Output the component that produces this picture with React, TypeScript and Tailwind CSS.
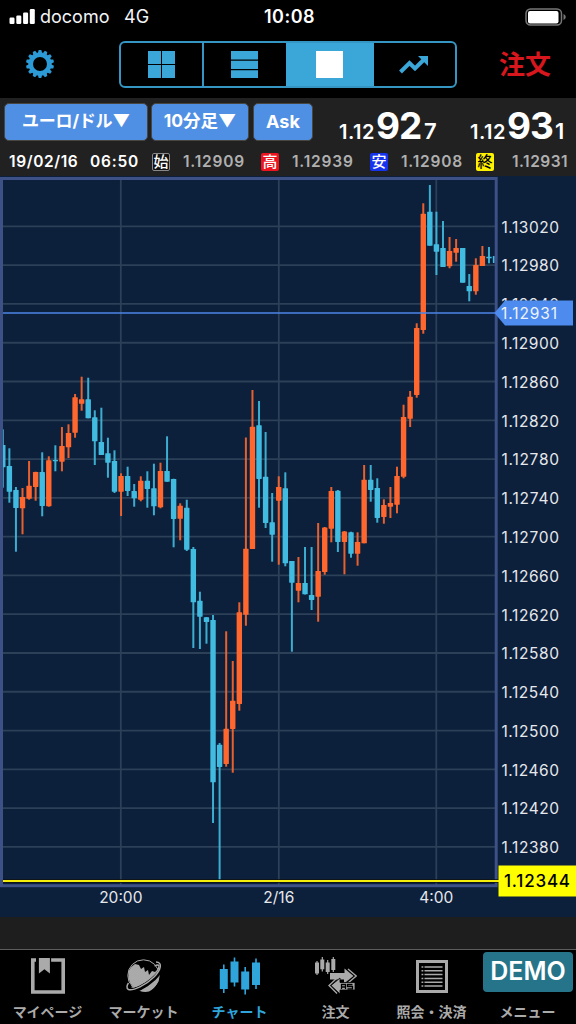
import type { ReactNode } from "react"
import clsx from "clsx"

type Direction = "up" | "down"
// high, body top, body bottom, low (chart y) and direction
type Candle = [number, number, number, number, Direction]

const candles: Candle[] = [
  [429.3, 445, 467.3, 487.7, "down"],
  [448.3, 466, 491.7, 502.7, "down"],
  [487, 490, 508, 551.7, "down"],
  [488, 497, 508.3, 534.3, "up"],
  [461, 485.7, 498.7, 499.7, "up"],
  [471.7, 472, 487, 500.7, "up"],
  [452.3, 472, 506, 516.3, "down"],
  [456.3, 460.3, 506.3, 506.7, "up"],
  [445.3, 460, 461.3, 471.3, "down"],
  [427, 446, 461.7, 471.3, "up"],
  [424.3, 433, 447.3, 458, "up"],
  [394, 397.3, 432.7, 437.7, "up"],
  [376.7, 399.3, 403.7, 410.7, "up"],
  [377.7, 399.3, 418.3, 418.3, "down"],
  [410.3, 417.3, 441.3, 465, "down"],
  [407.7, 442, 455, 455, "down"],
  [437.7, 453.3, 462.7, 477.7, "down"],
  [450.3, 461, 491.7, 493, "down"],
  [473.3, 476, 491.7, 516, "up"],
  [466.7, 476, 491, 496, "down"],
  [484, 491, 498.3, 506.7, "down"],
  [476.3, 480.7, 499.7, 501.3, "up"],
  [471.3, 480.7, 489, 507.7, "down"],
  [463.7, 488.3, 506.3, 515.3, "down"],
  [462.7, 471, 507.3, 508.3, "up"],
  [436.3, 471, 481.7, 481.7, "down"],
  [478.7, 479, 519, 547.3, "down"],
  [503.3, 505.7, 518.7, 540.3, "up"],
  [499.7, 507.7, 549.7, 551, "down"],
  [547, 549, 602.3, 648, "down"],
  [591.7, 600.7, 616.7, 649, "down"],
  [617, 617.3, 622, 643.7, "down"],
  [615, 620, 782.3, 823, "down"],
  [743, 744.7, 767, 880.3, "down"],
  [631.3, 728.7, 764, 766.7, "up"],
  [661, 700.7, 729, 772.7, "up"],
  [602.3, 612.3, 704, 710.7, "up"],
  [437.5, 548.7, 614.8, 625.7, "up"],
  [390, 426.7, 549, 549, "up"],
  [401, 425.3, 479, 507.7, "down"],
  [432, 476.7, 523, 528, "down"],
  [493, 522.3, 534.7, 561.7, "down"],
  [476.3, 487, 500.7, 564.7, "up"],
  [472.3, 488.3, 563.3, 566.3, "down"],
  [561, 561, 582.7, 651.7, "down"],
  [557, 583, 590.7, 602.3, "up"],
  [547, 583, 594.3, 594.5, "down"],
  [547, 595, 600, 610, "down"],
  [523, 571, 596.7, 621.7, "up"],
  [527, 527.5, 572, 574.7, "up"],
  [487, 491, 528.7, 542.3, "up"],
  [490, 490.7, 542, 552, "down"],
  [531, 531.5, 542, 574.3, "up"],
  [531.7, 532.3, 553.7, 557.7, "down"],
  [532.3, 542, 553.7, 565.7, "up"],
  [465, 479.7, 543.3, 543.3, "up"],
  [465, 479.7, 490, 501.7, "down"],
  [478.3, 488, 518, 522.7, "down"],
  [499.3, 505, 517, 523.7, "up"],
  [487, 503, 506.7, 518, "up"],
  [466.7, 476, 504.7, 513.3, "up"],
  [404.7, 417, 476.7, 478.3, "up"],
  [391, 396.7, 418.7, 427, "up"],
  [323.3, 328, 395, 397.7, "up"],
  [203.3, 213.7, 330, 333.7, "up"],
  [185, 211.7, 245.7, 245.7, "down"],
  [211.7, 244.3, 251.7, 275, "down"],
  [221, 248, 267, 267, "down"],
  [237, 251, 266.3, 268.3, "up"],
  [239, 248, 252.7, 261.7, "up"],
  [248, 248, 282.7, 282.7, "down"],
  [274, 286, 291.3, 301.3, "down"],
  [258.3, 265, 291.3, 294.7, "up"],
  [246, 256, 266, 266, "up"],
  [247, 256.7, 258.3, 263.3, "down"],
  [256, 256, 263, 263, "down"],
]

const prices = [
  "1.13020", "1.12980", "1.12940", "1.12900", "1.12860", "1.12820", "1.12780", "1.12740", "1.12700",
  "1.12660", "1.12620", "1.12580", "1.12540", "1.12500", "1.12460", "1.12420", "1.12380",
]

const times = [
  { x: 120.8, label: "20:00" },
  { x: 278.8, label: "2/16" },
  { x: 436.3, label: "4:00" },
]

const candleX = (i: number) => 2.8 + i * 6.57
const priceY = (i: number) => 226.4 + i * 38.78

function StatusBar() {
  return (
    <div className="grid h-[33px] grid-cols-3 items-center px-[9px]">
      <div className="flex items-center text-[18px] text-gray-100">
        <svg width="27" height="16" viewBox="0 0 27 16" fill="#fff">
          <rect x="0.5" y="8.5" width="5" height="6.5" rx="1.2" />
          <rect x="7.3" y="6.5" width="5" height="8.5" rx="1.2" />
          <rect x="14.1" y="3.5" width="5" height="11.5" rx="1.2" />
          <rect x="20.8" y="0" width="5" height="15" rx="1.2" />
        </svg>
        <span className="ml-1 w-[84px]">docomo</span>
        <span>4G</span>
      </div>
      <div className="pl-[3px] text-center text-[18px] font-semibold tracking-[0.5px]">10:08</div>
      <svg className="ml-auto" width="42" height="18" viewBox="0 0 42 18">
        <rect x="1" y="1" width="35.5" height="16" rx="4.5" fill="none" stroke="#777" strokeWidth="1.5" />
        <rect x="3" y="3" width="30.5" height="12.5" rx="2" fill="#fff" />
        <path d="M38.5 6v6q2.3-1 2.3-3t-2.3-3Z" fill="#777" />
      </svg>
    </div>
  )
}

function GearIcon() {
  return (
    <svg className="mb-[3px]" width="28" height="28" viewBox="-14 -14 28 28">
      <circle r="9.3" fill="none" stroke="#2d9ad8" strokeWidth="4.6" />
      {Array.from({ length: 14 }, (_, i) => (
        <path key={i} d="M-2.2-10.8-1.3-14H1.3L2.2-10.8Z" fill="#2d9ad8" transform={`rotate(${(i * 360) / 14})`} />
      ))}
    </svg>
  )
}

function Toolbar() {
  return (
    <div className="flex h-[65px] items-center pl-[26px]">
      <GearIcon />
      <div className="mb-[2px] ml-[65px] grid h-[47px] w-[338px] grid-cols-[83px_84px_86px_1fr] overflow-hidden rounded-[6px] border-2 border-[#3596c3]">
        <div className="flex items-center justify-center border-r-2 border-[#3596c3] pr-[1px]">
          <svg width="27" height="27" fill="#3ba7d8">
            <path d="M0 0h13v13H0zM14 0h13v13H14zM0 14h13v13H0zM14 14h13v13H14z" />
          </svg>
        </div>
        <div className="flex items-center justify-center pr-[3px]">
          <svg width="27" height="27" fill="#3ba7d8">
            <path d="M0 0h27v8.5H0zM0 9.7h27V18H0zM0 19.2h27V27H0z" />
          </svg>
        </div>
        <div className="-ml-[2px] flex items-center justify-center bg-[#3ba7d8] pr-[1px]">
          <div className="size-[27px] bg-white" />
        </div>
        <div className="flex items-center justify-center pr-[1px]">
          <svg width="30" height="20" viewBox="0 0 30 20">
            <path d="M1.5 17 10.5 8l5.5 5.5 9-9" fill="none" stroke="#3ba7d8" strokeWidth="4" />
            <path d="M19 1h10v10Z" fill="#3ba7d8" />
          </svg>
        </div>
      </div>
      <div className="mb-[3px] ml-[42px] text-[26px] font-bold text-[#d8161d]">注文</div>
    </div>
  )
}

function SelectButton({ className, children }: { className: string; children: ReactNode }) {
  return (
    <div className={clsx("flex h-[38px] items-center justify-center rounded-[5px] border border-[#49463f] bg-[#5090e4] font-bold", className)}>
      {children}
    </div>
  )
}

function Rate({ big, small, className }: { big: string; small: string; className: string }) {
  return (
    <div className={clsx("flex items-baseline font-semibold leading-none", className)}>
      <span className="w-[37px] text-[20px] tracking-[0.5px]">1.12</span>
      <span className="w-[48px] text-[37px] font-bold tracking-[-1px]">{big}</span>
      <span className="text-[22px]">{small}</span>
    </div>
  )
}

function Ohlc({ mark, value, className }: { mark: string; value: string; className: string }) {
  return (
    <>
      <span className={clsx("mr-[13px] flex size-[18px] shrink-0 items-center justify-center rounded-[2px] text-[15px] font-medium leading-none", className)}>
        {mark}
      </span>
      <span className="w-[78px] shrink-0 text-[15.5px] font-semibold tracking-[0.8px] text-[#b0b0b0]">{value}</span>
    </>
  )
}

function QuotePanel() {
  return (
    <div className="h-[78px] bg-[#212121]">
      <div className="flex h-[47px] items-center pl-[4px]">
        <SelectButton className="w-[144px] text-[17px] tracking-[-0.2px]">ユーロ/ドル▼</SelectButton>
        <SelectButton className="ml-[3px] w-[98px] text-[17.5px]">10分足▼</SelectButton>
        <SelectButton className="ml-[4px] w-[60px] text-[18px]">Ask</SelectButton>
        <Rate big="92" small="7" className="ml-[26px] mt-[7px] w-[131px]" />
        <Rate big="93" small="1" className="mt-[7px]" />
      </div>
      <div className="flex h-[31px] items-center pl-[9px] pt-[2px]">
        <span className="w-[81px] shrink-0 text-[15.5px] font-semibold tracking-[0.6px]">19/02/16</span>
        <span className="w-[62px] shrink-0 text-[15.5px] font-semibold tracking-[0.8px]">06:50</span>
        <Ohlc mark="始" value="1.12909" className="border border-[#888] bg-[#111] text-white" />
        <Ohlc mark="高" value="1.12939" className="bg-[#ed1420] text-white" />
        <Ohlc mark="安" value="1.12908" className="bg-[#1634ee] text-white" />
        <span className="-ml-[3px] mr-[5px] flex items-center">
          <Ohlc mark="終" value="" className="bg-[#fff200] text-black" />
        </span>
        <span className="-ml-[78px] text-[15.5px] font-semibold tracking-[0.5px] text-[#b0b0b0]">1.12931</span>
      </div>
    </div>
  )
}

function Chart() {
  return (
    <svg className="block" width="576" height="741" viewBox="0 176 576 741">
      <defs>
        <clipPath id="plot">
          <rect x="3" y="180" width="491.5" height="704" />
        </clipPath>
      </defs>
      <rect y="176" width="576" height="741" fill="#0c1f3b" />
      <g stroke="#2c4158" strokeWidth="1.8">
        {prices.map((price, i) => (
          <line key={price} x1="3" x2="495" y1={priceY(i)} y2={priceY(i)} />
        ))}
        {times.map(({ x }) => (
          <line key={x} x1={x} x2={x} y1="179" y2="885" />
        ))}
      </g>
      <g clipPath="url(#plot)">
        {candles.map(([high, top, bottom, low, dir], i) => (
          <g key={i} fill={dir === "up" ? "#ff672e" : "#41bce0"}>
            <rect x={candleX(i) - 1} y={high} width="2" height={low - high} opacity="0.9" />
            <rect x={candleX(i) - 2.7} y={top} width="5.4" height={bottom - top} rx="0.4" />
          </g>
        ))}
      </g>
      <rect x="1.5" y="178.5" width="494.7" height="707.2" fill="none" stroke="#3d5186" strokeWidth="3" />
      <g fill="#e6e8ec" fontSize="15.5">
        {prices.map((price, i) => (
          <text key={price} x="501.5" y={priceY(i) + 6.3} textLength="57.5">{price}</text>
        ))}
        {times.map(({ x, label }) => (
          <text key={label} x={x} y="903" textAnchor="middle">{label}</text>
        ))}
      </g>
      <path d="M3 313h492" stroke="#4b86e6" strokeWidth="1.7" />
      <path d="M494.5 313 505 300.5h68v25h-68Z" fill="#4d8bee" />
      <text x="501" y="319" fontSize="15.5" fill="#eef3fc" textLength="56">1.12931</text>
      <path d="M3 881h496" stroke="#111" strokeWidth="3.5" />
      <path d="M3 881h496" stroke="#f4ec0a" strokeWidth="1.9" />
      <rect x="498.5" y="865.5" width="77.5" height="31" fill="#ff0" />
      <text x="504" y="887" fontSize="17" fontWeight="500" fill="#000" textLength="66">1.12344</text>
    </svg>
  )
}

function BookmarkIcon() {
  return (
    <svg width="34" height="36" viewBox="0 0 34 36">
      <path d="M5 2H1.8v32h30.4V2H19" fill="none" stroke="#aaa" strokeWidth="3.6" />
      <path d="M6.7 0h13.4v17.5l-6.7-4.5-6.7 4.5Z" fill="#000" />
      <path d="M7.9 0h11v15.5l-5.5-4.3-5.5 4.3Z" fill="#aaa" />
    </svg>
  )
}

function GlobeIcon() {
  return (
    <svg width="38" height="36" viewBox="0 0 38 36">
      <circle cx="18.5" cy="17.5" r="15.7" fill="none" stroke="#aaa" strokeWidth="1" />
      <path d="M3.5 14Q5 9 10 6l4 1 2 4 3-2 1 5 3-2 1 5 3-4 3 1 4-3Q36 27 24 33.5q-7 1.5-13-2.5-9-6-7.5-17Z" fill="#aaa" />
      <path d="M31.5 4.5C40 4.500 36 13 28.500 20.500 20.500 28 9 33.500 4.500 32.500.5 31.500 1.500 28 3.500 25" fill="none" stroke="#000" strokeWidth="5" />
      <path d="M31 4c7 0 5 8-2 15C21 27 8 33 3.500 31.500 1 30.500 2 27 3.500 25" fill="none" stroke="#aaa" strokeWidth="1.5" />
      <path d="M29.500 8q4-2 4.500 0c0 3-4 8-9 12-6 5-15 10-18.500 9" fill="none" stroke="#aaa" strokeWidth="1.3" />
    </svg>
  )
}

function CandlesIcon() {
  return (
    <svg width="42" height="38" viewBox="0 0 42 38" fill="#2fa5dc">
      <path d="M.8 12h8v20h-8zM4 7.5h1.6V36H4zM11.5 4.5h8v21h-8zM14.7.5h1.6v29h-1.6zM22.2 14.5h8v18h-8zM25.4 10H27v27.5h-1.6zM33 5.5h8V28h-8zM36.2 1.5h1.6V32h-1.6z" />
    </svg>
  )
}

function OrderIcon() {
  return (
    <svg width="42" height="38" viewBox="0 0 42 38" fill="#aaa">
      <path d="M0 5.5h4v11H0zM1.4 4h1.2v14H1.4zM5.3 2.500h4v9.7h-4zM6.7 0h1.2v14.500H6.7zM10.7 5.500h4v9.500h-4zM12.1 3h1.2v14h-1.200zM16.300 2h4v11h-4zM17.700 0h1.200v15h-1.200z" />
      <path d="M15 16h14.500v-4.500L38.500 19l-9.500 7.500V22.500H15Z" />
      <path d="m33 12 8.200 7-8.200 7" fill="none" stroke="#aaa" strokeWidth="1.3" />
      <path d="m16 28.500 9-7.500v4.500h15v7.500H25V37Z" stroke="#000" strokeWidth="0.8" />
      <path d="m22 21-8 7.500 8 8" fill="none" stroke="#aaa" strokeWidth="1.3" />
      <path d="M26.500 32v-4.500h4V32m-4-2h4M37.500 27.500h-5v2h5V32h-5" fill="none" stroke="#000" strokeWidth="1.3" />
    </svg>
  )
}

function ListIcon() {
  return (
    <svg width="32" height="33" viewBox="0 0 32 33">
      <rect x="1.5" y="1.5" width="29" height="30" fill="none" stroke="#aaa" strokeWidth="3" />
      {[7, 10.8, 14.6, 18.4, 22.2, 26].map((y) => (
        <path key={y} d={`M5.5 ${y}h1.8M8.5 ${y}h18`} stroke="#aaa" strokeWidth="1.5" />
      ))}
    </svg>
  )
}

const tabs = [
  { label: "マイページ", icon: <BookmarkIcon /> },
  { label: "マーケット", icon: <GlobeIcon /> },
  { label: "チャート", icon: <CandlesIcon />, active: true },
  { label: "注文", icon: <OrderIcon /> },
  { label: "照会・決済", icon: <ListIcon /> },
  {
    label: "メニュー",
    icon: <div className="flex h-[40px] w-[90px] items-center justify-center rounded-[4px] bg-[#257489] text-[25px] font-semibold text-white">DEMO</div>,
    wide: true,
  },
]

function TabBar() {
  return (
    <div className="grid h-[75px] grid-cols-6 border-t border-[#5c5c5c] bg-black">
      {tabs.map(({ label, icon, active, wide }) => (
        <div key={label} className={clsx("flex flex-col items-center text-[14px] font-bold", active ? "text-[#2fa5dc]" : "text-[#aaa]")}>
          <div className={clsx("flex h-[52px] shrink-0 justify-center", wide ? "items-start pt-[2px]" : "items-center")}>{icon}</div>
          <span className="-ml-px whitespace-nowrap leading-[20px]">{label}</span>
        </div>
      ))}
    </div>
  )
}

export default function App() {
  return (
    <div className="flex h-[1024px] w-[576px] flex-col overflow-hidden bg-black font-['Inter','Noto_Sans_CJK_JP',sans-serif] text-white">
      <StatusBar />
      <Toolbar />
      <QuotePanel />
      <Chart />
      <div className="h-[32px] bg-[#1e1e1e]" />
      <TabBar />
    </div>
  )
}
